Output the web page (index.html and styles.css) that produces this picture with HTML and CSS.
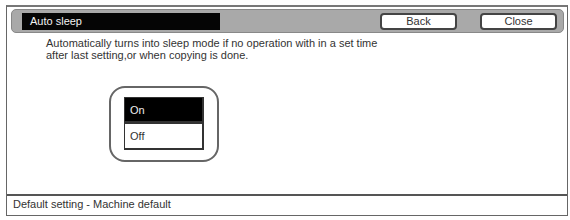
FILE: index.html
```html
<!DOCTYPE html>
<html>
<head>
<meta charset="utf-8">
<link rel="stylesheet" href="styles.css">
</head>
<body>
<div class="screen">
  <div class="main">
    <div class="titlebar">
      <div class="title">Auto sleep</div>
      <div class="spacer"></div>
      <div class="btn">Back</div>
      <div class="btn">Close</div>
    </div>
    <div class="desc">Automatically turns into sleep mode if no operation with in a set time<br>after last setting,or when copying is done.</div>
    <div class="group">
      <div class="opt on">On</div>
      <div class="opt">Off</div>
    </div>
  </div>
  <div class="status">Default setting - Machine default</div>
</div>
</body>
</html>
```
FILE: styles.css
```css
html, body { margin: 0; padding: 0; background: #fff; }
body {
  width: 570px; height: 220px;
  padding: 5px 2px 4px 6px;
  box-sizing: border-box;
  font-family: "Liberation Sans", Arial, sans-serif;
  color: #222;
}
.screen {
  height: 100%;
  box-sizing: border-box;
  border: 1px solid #666;
  border-top: 2px solid #777;
  display: flex;
  flex-direction: column;
}
.main { flex: 1; display: flex; flex-direction: column; }
.titlebar {
  margin: 2px 3px 0 4px;
  height: 24px;
  box-sizing: border-box;
  background: #a9a9a9;
  border: 1px solid #888;
  border-radius: 5px;
  display: flex;
  align-items: center;
  padding: 0 6px 0 10px;
  gap: 23px;
}
.title {
  width: 198px; height: 17px;
  background: #050505;
  color: #f2f2f2;
  font-size: 11px;
  line-height: 17px;
  padding-left: 8px;
  box-sizing: border-box;
}
.spacer { flex: 1; }
.btn {
  width: 77px; height: 17px;
  box-sizing: border-box;
  background: #fff;
  border: 2px solid #444;
  border-radius: 4px;
  font-size: 11px;
  line-height: 13px;
  text-align: center;
  color: #333;
}
.titlebar .btn:first-of-type { margin-right: 0; }
.desc {
  margin: 4px 0 0 39px;
  font-size: 11px;
  line-height: 12px;
  color: #333;
}
.group {
  margin: 25px 0 0 102px;
  width: 110px; height: 76px;
  box-sizing: border-box;
  border: 2px solid #666;
  border-radius: 16px;
  display: flex;
  flex-direction: column;
  padding: 9px 0 0 13px;
}
.opt {
  width: 80px; height: 27px;
  box-sizing: border-box;
  border: 1px solid #333;
  border-right-width: 2px;
  border-bottom-width: 2px;
  font-size: 11px;
  line-height: 25px;
  padding-left: 5px;
  background: #fff;
  color: #333;
}
.opt.on { background: #000; color: #eee; height: 26px; }
.status {
  height: 19px;
  border-top: 2px solid #555;
  font-size: 11px;
  line-height: 17px;
  padding-left: 6px;
  color: #333;
}
```
